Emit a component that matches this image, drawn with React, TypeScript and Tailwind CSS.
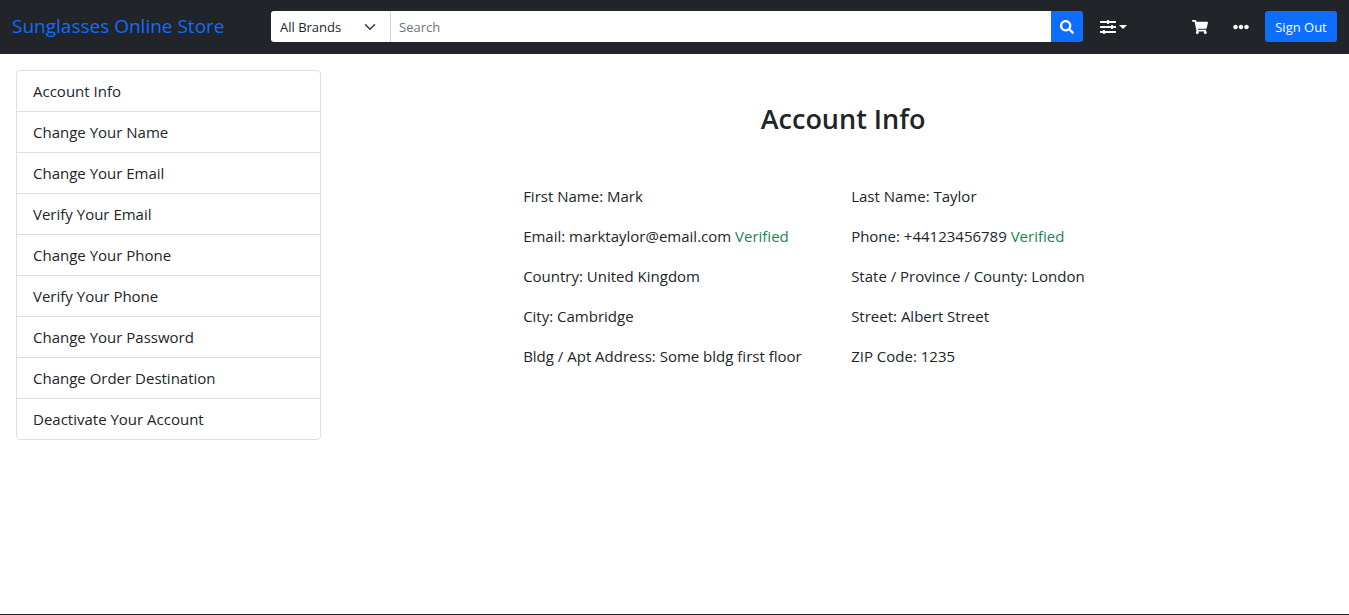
import { FaEllipsisH, FaSearch, FaShoppingCart, FaSlidersH } from "react-icons/fa";

type Detail = { label: string; value: string; verified?: boolean };

const menu = [
  "Account Info",
  "Change Your Name",
  "Change Your Email",
  "Verify Your Email",
  "Change Your Phone",
  "Verify Your Phone",
  "Change Your Password",
  "Change Order Destination",
  "Deactivate Your Account",
];

const details: Detail[] = [
  { label: "First Name", value: "Mark" },
  { label: "Last Name", value: "Taylor" },
  { label: "Email", value: "marktaylor@email.com", verified: true },
  { label: "Phone", value: "+44123456789", verified: true },
  { label: "Country", value: "United Kingdom" },
  { label: "State / Province / County", value: "London" },
  { label: "City", value: "Cambridge" },
  { label: "Street", value: "Albert Street" },
  { label: "Bldg / Apt Address", value: "Some bldg first floor" },
  { label: "ZIP Code", value: "1235" },
];

function Navbar() {
  return (
    <header className="flex items-center bg-[#212529] px-3 pt-[11px] pb-3 text-white">
      <a href="#" className="w-[259px] shrink-0 text-[19px] leading-[31px] text-[#0d6efd]">
        Sunglasses Online Store
      </a>
      <form className="flex h-[31px] grow text-[13px]" onSubmit={(e) => e.preventDefault()}>
        <div className="grid w-[119px] shrink-0 items-center">
          <select
            aria-label="Brand"
            className="col-start-1 row-start-1 h-[31px] w-full appearance-none rounded-l-[3px] bg-white pl-[9px] text-[#212529]"
          >
            <option>All Brands</option>
          </select>
          <svg
            viewBox="0 0 16 16"
            className="pointer-events-none col-start-1 row-start-1 mr-[14px] size-3 justify-self-end"
            fill="none"
            stroke="#343a40"
            strokeWidth="2"
            strokeLinecap="round"
            strokeLinejoin="round"
            aria-hidden="true"
          >
            <path d="m2 5 6 6 6-6" />
          </svg>
        </div>
        <input
          type="search"
          aria-label="Search"
          placeholder="Search"
          className="min-w-0 grow border-l border-[#ced4da] bg-white px-2 text-[#212529] placeholder:text-[#6c757d]"
        />
        <button
          type="submit"
          aria-label="Search"
          className="flex w-8 shrink-0 items-center justify-center rounded-r-[3px] bg-[#0d6efd]"
        >
          <FaSearch className="size-[14px]" />
        </button>
      </form>
      <button type="button" aria-label="Filters" className="ml-[17px] flex w-[92px] shrink-0 items-center gap-[3px]">
        <FaSlidersH className="size-4" />
        <svg viewBox="0 0 8 4" className="h-1 w-2" fill="currentColor" aria-hidden="true">
          <path d="M0 0h8L4 4z" />
        </svg>
      </button>
      <a href="#" aria-label="Cart">
        <FaShoppingCart className="size-4" />
      </a>
      <button type="button" aria-label="More" className="mx-4 pl-[9px]">
        <FaEllipsisH className="size-4" />
      </button>
      <button type="button" className="h-[31px] w-[72px] shrink-0 rounded-[3px] bg-[#0d6efd] text-[13px]">
        Sign Out
      </button>
    </header>
  );
}

export default function App() {
  return (
    <div className="flex min-h-screen flex-col bg-white font-['Open_Sans',sans-serif] text-[15px] leading-6 text-[#212529]">
      <Navbar />
      <div className="flex grow items-start">
        <nav aria-label="Account" className="w-1/4 shrink-0 p-4">
          <ul className="divide-y divide-[#dfdfdf] rounded border border-[#dfdfdf]">
            {menu.map((item) => (
              <li key={item}>
                <a href="#" className="block px-4 py-2">
                  {item}
                </a>
              </li>
            ))}
          </ul>
        </nav>
        <main className="grow pt-12">
          <h1 className="text-center text-[27px] leading-[34px] font-semibold">Account Info</h1>
          <div className="mx-auto mt-12 grid max-w-[656px] grid-cols-2 gap-y-4">
            {details.map(({ label, value, verified }) => (
              <p key={label} className="px-2 whitespace-nowrap">
                {label}: {value}
                {verified && <span className="text-[#198754]"> Verified</span>}
              </p>
            ))}
          </div>
        </main>
      </div>
      <footer className="h-px bg-[#212529]" />
    </div>
  );
}
